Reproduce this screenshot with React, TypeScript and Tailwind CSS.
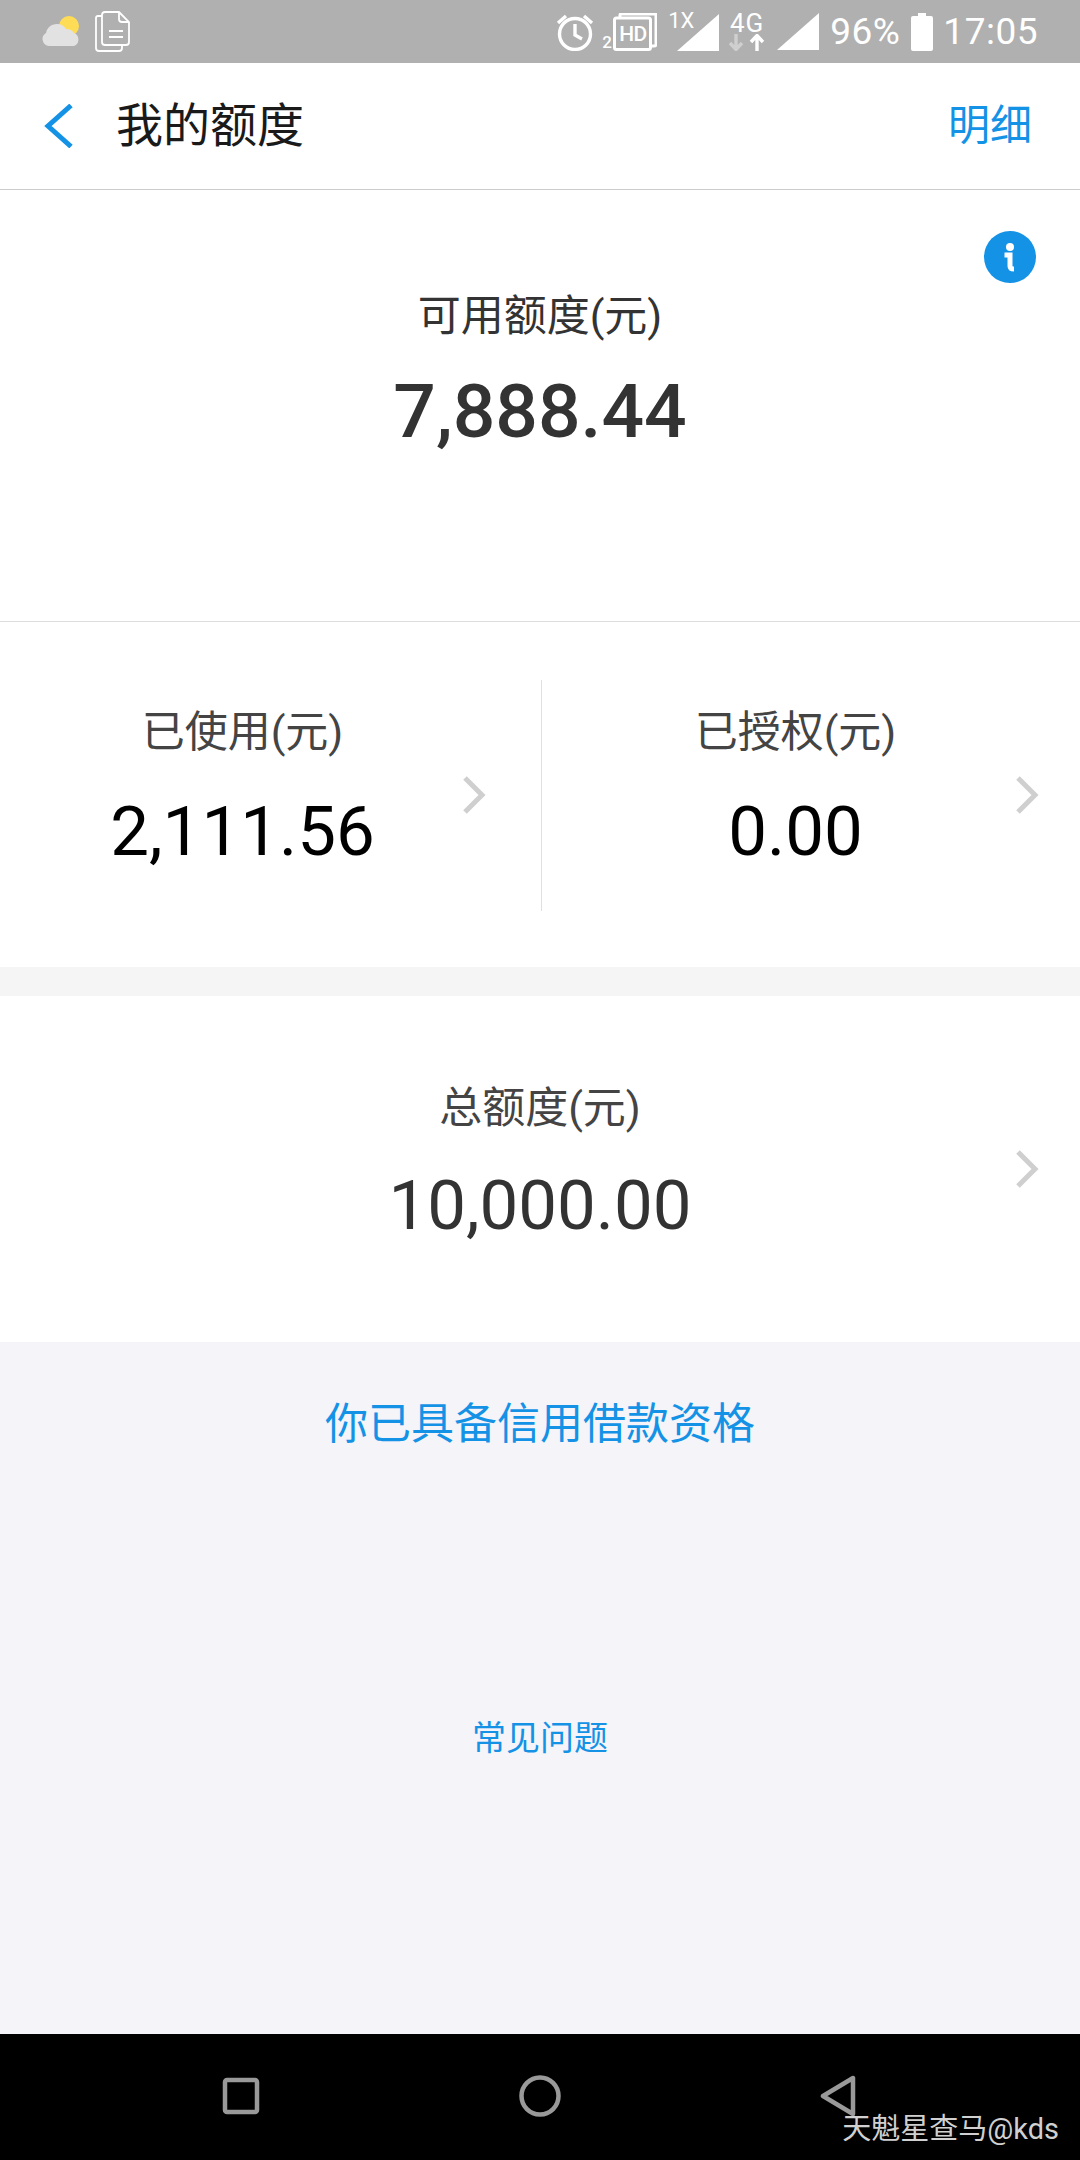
const font = { fontFamily: "Roboto, 'Noto Sans CJK SC', sans-serif" };

function Chevron() {
  return (
    <svg width="24" height="38" viewBox="0 0 24 38" className="shrink-0" fill="none">
      <path d="M3 2 L20 19 L3 36" stroke="#cfcfcf" strokeWidth="5" />
    </svg>
  );
}

function Signal() {
  return (
    <svg width="42" height="37" viewBox="0 0 42 37" className="shrink-0">
      <path d="M42 0 V37 H0 Z" fill="#fff" />
    </svg>
  );
}

function StatusBar() {
  return (
    <div className="flex h-[63px] items-center bg-[#b0b0b0] pl-[42px] text-white">
      <svg width="38" height="32" viewBox="0 0 38 32" className="shrink-0">
        <circle cx="27" cy="10" r="10" fill="#ffdc55" />
        <path
          d="M7 30 A7 7 0 0 1 4 17 A11 11 0 0 1 24 13 A9 9 0 0 1 32 17 A7 7 0 0 1 32 30 Z"
          fill="#e2e2e2"
        />
      </svg>
      <svg width="36" height="41" viewBox="0 0 36 41" className="ml-[15px] shrink-0" fill="none" stroke="#fff" strokeWidth="1.8">
        <path d="M7 5 H3 Q1 5 1 7 V37 Q1 40 4 40 H24 Q27 40 27 37 V34" />
        <path d="M10 1 H24 L34 11 V31 Q34 34 31 34 H10 Q7 34 7 31 V4 Q7 1 10 1 Z" fill="#b0b0b0" />
        <path d="M24 1 V8 Q24 11 27 11 H34" />
        <path d="M14 20 H28 M14 26 H28" />
      </svg>

      <div className="ml-auto flex items-center">
        <svg width="38" height="38" viewBox="0 0 38 38" className="shrink-0" fill="none" stroke="#fff" strokeWidth="3.4">
          <circle cx="19" cy="21" r="15.5" />
          <path d="M19 11 V22 L26 26" />
          <path d="M2 10 L10 3 M36 10 L28 3" />
        </svg>
        <div className="relative ml-[8px] flex h-[38px] w-[55px] shrink-0 items-end">
          <span className="text-[17px] leading-[18px] font-medium">2</span>
          <svg width="44" height="38" viewBox="0 0 44 38" className="absolute top-0 right-0" fill="none" stroke="#fff" strokeWidth="3">
            <path d="M7 4 V2 Q7 1 8 1 H42 Q43 1 43 2 V31 Q43 33 41 33 H38" />
            <rect x="1.5" y="5" width="36" height="31.5" rx="2" fill="#b0b0b0" />
          </svg>
          <span className="absolute top-[9px] left-[17px] text-[21px] leading-[24px] font-medium tracking-[-0.5px]">HD</span>
        </div>
        <div className="relative ml-[10px] h-[38px] w-[52px] shrink-0">
          <span className="absolute -top-[4px] left-[1px] text-[22px] leading-[24px]">1X</span>
          <div className="absolute right-0 bottom-0">
            <Signal />
          </div>
        </div>
        <div className="ml-[11px] flex w-[34px] shrink-0 flex-col items-center">
          <span className="text-[26px] leading-[22px] tracking-[1px] whitespace-nowrap">4G</span>
          <svg width="36" height="17" viewBox="0 0 36 17" fill="none" strokeWidth="3.4">
            <path d="M7 0 V15 M1 9 L7 15.5 L13 9" stroke="#cfcfcf" />
            <path d="M28 17 V2 M22 8 L28 1.5 L34 8" stroke="#fff" />
          </svg>
        </div>
        <div className="ml-[13px]">
          <Signal />
        </div>
        <span className="ml-[11px] text-[37px] leading-[44px] tracking-[0.5px]">96%</span>
        <svg width="22" height="38" viewBox="0 0 22 38" className="ml-[11px] shrink-0">
          <path d="M7 0 H15 V3 H20 Q22 3 22 5 V36 Q22 38 20 38 H2 Q0 38 0 36 V5 Q0 3 2 3 H7 Z" fill="#fff" />
        </svg>
        <span className="mr-[42px] ml-[10px] text-[37px] leading-[44px] tracking-[0.5px]">17:05</span>
      </div>
    </div>
  );
}

function Header() {
  return (
    <div className="flex h-[127px] items-center border-b border-[#cccccc] bg-white pb-[1px]">
      <svg width="30" height="44" viewBox="0 0 30 44" className="ml-[43px] shrink-0" fill="none">
        <path d="M28 1.5 L5 22 L28 42.5" stroke="#1492e6" strokeWidth="5" />
      </svg>
      <span className="ml-[43px] text-[47px] leading-[60px] text-[#1a1a1a]">我的额度</span>
      <span className="mr-[48px] ml-auto text-[42px] leading-[60px] text-[#1492e6]">明细</span>
    </div>
  );
}

function Stat({ label, value, className }: { label: string; value: string; className: string }) {
  return (
    <div className={`flex min-w-0 flex-1 flex-col text-center ${className}`}>
      <div className="text-[43px] leading-[60px] text-[#444444]">{label}</div>
      <div className="text-[69px] leading-[90px]">{value}</div>
    </div>
  );
}

export default function App() {
  return (
    <div className="relative flex h-[2160px] w-[1080px] flex-col overflow-hidden bg-[#f4f4f9]" style={font}>
      <StatusBar />
      <Header />

      {/* available */}
      <div className="relative h-[432px] border-b border-[#dddddd] bg-white pt-[96px] text-center">
        <div className="absolute top-[41px] right-[44px] flex h-[52px] w-[52px] items-center justify-center rounded-full bg-[#1492e6]">
          <svg width="14" height="32" viewBox="0 0 14 32" fill="none">
            <circle cx="7" cy="6" r="4" fill="#fff" />
            <path d="M1.5 14 H7 V25 Q7 28 11 28" stroke="#fff" strokeWidth="5" />
          </svg>
        </div>
        <div className="text-[43px] leading-[60px] text-[#333333]">可用额度(元)</div>
        <div className="mt-[20px] text-[75px] leading-[90px] font-medium text-[#333333]">7,888.44</div>
      </div>

      {/* used / authorized */}
      <div className="flex h-[345px] items-start bg-white pt-[58px]">
        <div className="flex h-[231px] w-[541px] items-center pl-[23px]">
          <Stat label="已使用(元)" value="2,111.56" className="gap-[25px] pb-[13px] text-black" />
          <div className="mr-[55px] pb-[2px]">
            <Chevron />
          </div>
        </div>
        <div className="h-[231px] w-px bg-[#e0e0e0]" />
        <div className="flex h-[231px] flex-1 items-center pl-[34px]">
          <Stat label="已授权(元)" value="0.00" className="gap-[25px] pb-[13px] text-black" />
          <div className="mr-[41px] pb-[2px]">
            <Chevron />
          </div>
        </div>
      </div>

      <div className="h-[29px] bg-[#f5f5f5]" />

      {/* total */}
      <div className="flex h-[346px] items-center bg-white pl-[65px]">
        <Stat label="总额度(元)" value="10,000.00" className="gap-[23px] pb-[9px] text-[#333333]" />
        <div className="mr-[41px]">
          <Chevron />
        </div>
      </div>

      <div className="flex flex-1 flex-col items-center">
        <div className="mt-[52px] text-[43px] leading-[60px] text-[#1492e6]">你已具备信用借款资格</div>
        <div className="mt-[259px] text-[34px] leading-[50px] text-[#1492e6]">常见问题</div>
      </div>

      {/* android nav bar */}
      <div className="flex h-[126px] items-start bg-black pt-[43px]">
        <svg width="38" height="38" viewBox="0 0 38 38" className="ml-[222px] shrink-0" fill="none">
          <rect x="3" y="3" width="32" height="32" rx="2" stroke="#999999" strokeWidth="4.5" />
        </svg>
        <svg width="42" height="42" viewBox="0 0 42 42" className="ml-[259px] -mt-[2px] shrink-0" fill="none">
          <circle cx="21" cy="21" r="18.5" stroke="#999999" strokeWidth="4.5" />
        </svg>
        <svg width="38" height="42" viewBox="0 0 38 42" className="ml-[259px] -mt-[2px] shrink-0" fill="none">
          <path d="M33 3 V39 L3 21 Z" stroke="#999999" strokeWidth="4.5" strokeLinejoin="round" />
        </svg>
      </div>

      {/* watermark */}
      <div className="absolute top-[2111px] right-[21px] text-[29px] leading-[36px] whitespace-nowrap text-[#d0d0d0]">
        天魁星查马@kds
      </div>
    </div>
  );
}
